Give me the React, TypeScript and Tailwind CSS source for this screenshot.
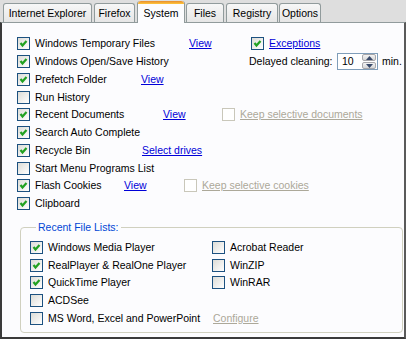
import React from "react";

const FONT = { fontFamily: '"Liberation Sans", Arial, sans-serif' };

function Box({ checked, disabled }: { checked?: boolean; disabled?: boolean }) {
  return (
    <span
      className={`w-[13px] h-[13px] shrink-0 border flex items-center justify-center ${
        disabled
          ? "border-[#c9c7ba] bg-white"
          : "border-[#1c5180] bg-linear-to-br from-[#dcdcd7] to-white"
      }`}
    >
      {checked && (
        <svg width="11" height="11" viewBox="0 0 11 11">
          <path d="M2.5 5 L4.5 7.5 L8.5 3" stroke="#21a121" strokeWidth="2.2" fill="none" />
        </svg>
      )}
    </span>
  );
}

function Check({
  label,
  checked,
  disabled,
  w,
}: {
  label: string;
  checked?: boolean;
  disabled?: boolean;
  w?: string;
}) {
  return (
    <div className={`flex items-center gap-[5px] shrink-0 ${w ?? ""}`}>
      <Box checked={checked} disabled={disabled} />
      <span className={disabled ? "text-[#aca899] underline" : "text-black"}>{label}</span>
    </div>
  );
}

function Link({ children }: { children: React.ReactNode }) {
  return <span className="text-[#0000d8] underline">{children}</span>;
}

const TABS = [
  { label: "Internet Explorer", w: "w-[89px]", ml: "ml-[3px]" },
  { label: "Firefox", w: "w-[41px]", ml: "ml-[2px]" },
  { label: "System", w: "w-[48px]", ml: "ml-[2px]", active: true },
  { label: "Files", w: "w-[38px]", ml: "ml-[1px]" },
  { label: "Registry", w: "w-[52px]", ml: "ml-[2px]" },
  { label: "Options", w: "w-[42px]", ml: "ml-[1px]" },
];

function Spinner() {
  return (
    <div className="w-[41px] h-[17px] border border-[#7f9db9] bg-white flex items-center ml-[3px]">
      <span className="flex-1 pl-[4px] text-black">10</span>
      <div className="w-[15px] h-[15px] flex flex-col gap-px pr-px">
        <div className="flex-1 rounded-[2px] border border-[#a7a6aa] bg-linear-to-b from-[#f4f4f4] to-[#d6d6d6] flex items-center justify-center">
          <svg width="7" height="4" viewBox="0 0 7 4"><path d="M0 4 L3.5 0 L7 4 Z" fill="#3a4a6a" /></svg>
        </div>
        <div className="flex-1 rounded-[2px] border border-[#a7a6aa] bg-linear-to-b from-[#f4f4f4] to-[#d6d6d6] flex items-center justify-center">
          <svg width="7" height="4" viewBox="0 0 7 4"><path d="M0 0 L7 0 L3.5 4 Z" fill="#3a4a6a" /></svg>
        </div>
      </div>
    </div>
  );
}

export default function App() {
  const row = "flex items-center h-[17.75px]";
  return (
    <div className="w-[406px] h-[339px] bg-[#dedede] flex flex-col overflow-hidden text-[10.5px] leading-[13px]" style={FONT}>
      {/* Tab strip */}
      <div className="h-[22px] flex items-end shrink-0">
        {TABS.map((t) =>
          t.active ? (
            <div
              key={t.label}
              className={`${t.w} ${t.ml} h-[22px] -mb-px relative z-10 bg-[#fcfcfe] border-x border-[#919b9c] rounded-t-[3px] flex flex-col`}
            >
              <div className="h-[3px] rounded-t-[3px] bg-linear-to-b from-[#e68b2c] to-[#ffc73c]" />
              <div className="flex-1 flex items-center justify-center text-black">{t.label}</div>
            </div>
          ) : (
            <div
              key={t.label}
              className={`${t.w} ${t.ml} h-[19px] bg-linear-to-b from-[#f7f7f7] to-[#e6e6e6] border border-b-0 border-[#919b9c] rounded-t-[3px] flex items-center justify-center text-black`}
            >
              {t.label}
            </div>
          )
        )}
      </div>

      {/* Panel */}
      <div className="flex-1 bg-[#fcfcfe] border-t border-t-[#919b9c] border-l-2 border-l-[#3a3a3a] border-r-2 border-r-[#5a5a5a] border-b-2 border-b-[#3a3a3a] pt-[12px] pl-[15px] flex flex-col">
        <div className={row}>
          <Check label="Windows Temporary Files" checked w="w-[172px]" />
          <div className="w-[62px]"><Link>View</Link></div>
          <div className="flex items-center gap-[5px]">
            <Box checked />
            <Link>Exceptions</Link>
          </div>
        </div>
        <div className={row}>
          <Check label="Windows Open/Save History" checked w="w-[232px]" />
          <span className="w-[85px] text-black">Delayed cleaning:</span>
          <Spinner />
          <span className="ml-[4px] text-black">min.</span>
        </div>
        <div className={row}>
          <Check label="Prefetch Folder" checked w="w-[124px]" />
          <Link>View</Link>
        </div>
        <div className={row}>
          <Check label="Run History" />
        </div>
        <div className={row}>
          <Check label="Recent Documents" checked w="w-[146px]" />
          <div className="w-[59px]"><Link>View</Link></div>
          <Check label="Keep selective documents" disabled />
        </div>
        <div className={row}>
          <Check label="Search Auto Complete" checked />
        </div>
        <div className={row}>
          <Check label="Recycle Bin" checked w="w-[125px]" />
          <Link>Select drives</Link>
        </div>
        <div className={row}>
          <Check label="Start Menu Programs List" />
        </div>
        <div className={row}>
          <Check label="Flash Cookies" checked w="w-[107px]" />
          <div className="w-[60px]"><Link>View</Link></div>
          <Check label="Keep selective cookies" disabled />
        </div>
        <div className={row}>
          <Check label="Clipboard" checked />
        </div>

        <fieldset className="mt-[8px] mr-[1px] ml-[3px] h-[112px] border border-[#d0d0bf] rounded-[4px] pl-[9px] pt-[5px]">
          <legend className="ml-[6px] px-[2px] text-[#0046d5]">Recent File Lists:</legend>
          <div className="flex">
            <div className="w-[182px] flex flex-col">
              <div className={row}><Check label="Windows Media Player" checked /></div>
              <div className={row}><Check label="RealPlayer & RealOne Player" checked /></div>
              <div className={row}><Check label="QuickTime Player" checked /></div>
              <div className={row}><Check label="ACDSee" /></div>
              <div className={row}><Check label="MS Word, Excel and PowerPoint" /></div>
            </div>
            <div className="flex flex-col">
              <div className={row}><Check label="Acrobat Reader" /></div>
              <div className={row}><Check label="WinZIP" /></div>
              <div className={row}><Check label="WinRAR" /></div>
              <div className={row} />
              <div className={row}>
                <span className="ml-[1px] text-[#aca899] underline">Configure</span>
              </div>
            </div>
          </div>
        </fieldset>
      </div>
    </div>
  );
}
